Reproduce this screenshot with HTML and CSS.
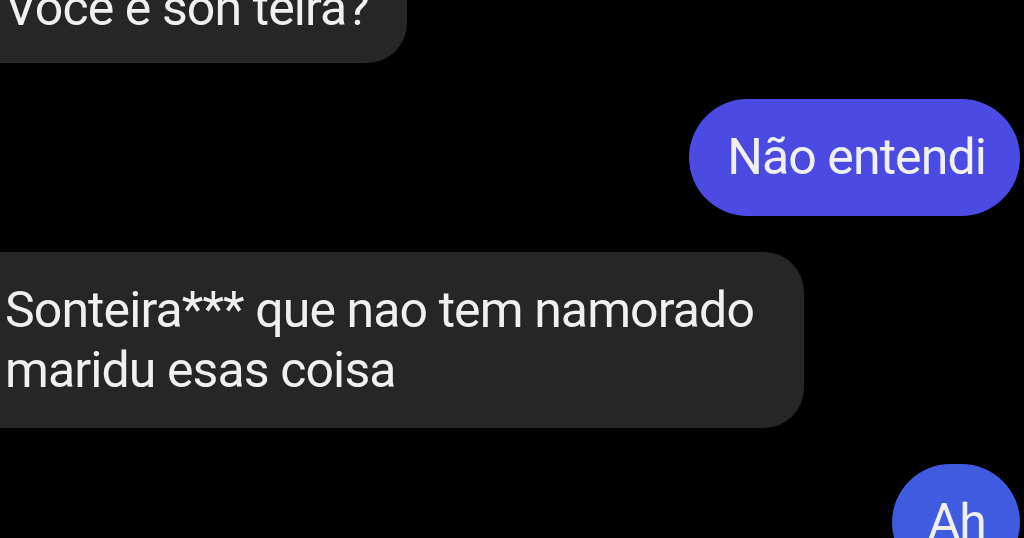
FILE: index.html
```html
<!DOCTYPE html>
<html lang="pt">
<head>
<meta charset="utf-8">
<link rel="stylesheet" href="styles.css">
</head>
<body>
<div class="chat">
  <div class="row in"><div class="bubble gray first">Você é son teira?</div></div>
  <div class="row out"><div class="bubble blue">Não entendi</div></div>
  <div class="row in"><div class="bubble gray multi">Sonteira*** que nao tem namorado<br>maridu esas coisa</div></div>
  <div class="row out"><div class="bubble blue ah">Ah</div></div>
</div>
</body>
</html>
```
FILE: styles.css
```css
html, body {
  margin: 0;
  padding: 0;
  background: #000;
  height: 100%;
  overflow: hidden;
}
body {
  font-family: Roboto, "Liberation Sans", sans-serif;
  color: #f0f0f0;
}
.chat {
  display: flex;
  flex-direction: column;
  gap: 36px;
  margin-top: -50px;
}
.row {
  display: flex;
}
.row.in { justify-content: flex-start; }
.row.out { justify-content: flex-end; padding-right: 4px; }
.bubble {
  font-size: 50px;
  line-height: 60px;
  letter-spacing: -0.9px;
  white-space: nowrap;
}
.gray {
  background: #262626;
  margin-left: -45px;
  padding-left: 50px;
  border-radius: 40px;
}
.first {
  padding-top: 28px;
  padding-bottom: 25px;
  padding-right: 38px;
}
.multi {
  padding-top: 28px;
  padding-bottom: 28px;
  padding-right: 50px;
}
.blue {
  background: #4b4be3;
  border-radius: 60px;
  padding: 28px 34px 29px 38px;
}
.ah {
  background: #3f5ce0;
  padding: 28px 34px 29px 36px;
}
```
